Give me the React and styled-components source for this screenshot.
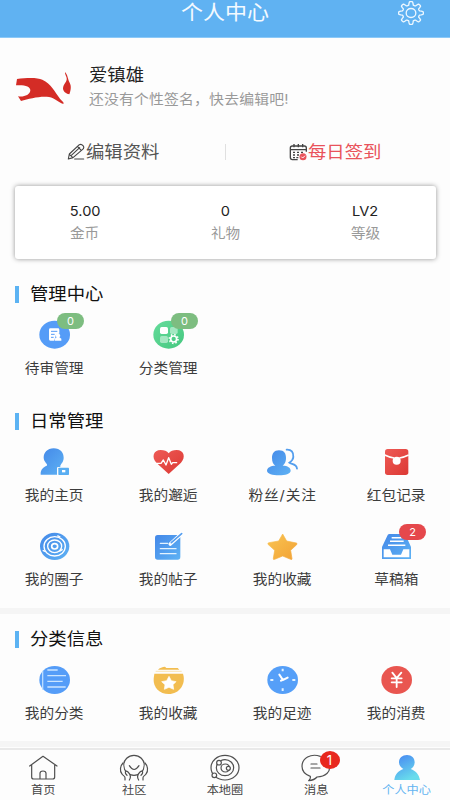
import React from "react";
import styled, { createGlobalStyle } from "styled-components";

const GlobalStyle = createGlobalStyle`
  * { box-sizing: border-box; }
  body {
    margin: 0;
    background: #fdfdfd;
    font-family: Inter, "Noto Sans CJK SC", sans-serif;
    color: #333;
  }
  svg { display: block; overflow: visible; }
`;

const Page = styled.div`
  display: flex;
  flex-direction: column;
  width: 450px;
  height: 800px;
  overflow: hidden;
`;

const Text = styled.span`
  display: inline-block;
  white-space: nowrap;
  font-size: ${(p) => p.$size}px;
  line-height: 20px;
  letter-spacing: ${(p) => p.$track || 0}px;
  color: ${(p) => p.$color || "#3c3c3c"};
  transform: scaleX(${(p) => p.$stretch || 1.08});
  transform-origin: ${(p) => p.$origin || "center"};
`;

const Header = styled.header`
  display: grid;
  grid-template-columns: 1fr auto 1fr;
  align-items: center;
  height: 38px;
  flex: none;
  padding: 0 25px 12px;
  background: #60b2f2;
  border-bottom: 1px solid #8cc9f8;
`;

const HeaderAction = styled.div`
  grid-column: 3;
  justify-self: end;
`;

const HeaderTitle = styled.div`
  grid-column: 2;
  padding-top: 1px;
`;

const Profile = styled.section`
  display: flex;
  height: 92px;
  flex: none;
  padding: 26px 14px 0;
  gap: 15px;
`;

const Avatar = styled.div`
  width: 60px;
  height: 50px;
`;

const ProfileText = styled.div`
  display: flex;
  flex-direction: column;
  align-items: flex-start;
  padding-top: 1px;
  gap: 4px;
`;

const Actions = styled.div`
  display: grid;
  grid-template-columns: 1fr 1px 1fr;
  align-items: center;
  height: 44px;
  flex: none;
`;

const ActionLink = styled.div`
  display: flex;
  align-items: center;
  gap: ${(p) => p.$gap}px;
  padding-left: ${(p) => p.$inset}px;
`;

const Divider = styled.i`
  height: 16px;
  background: #e0e0e0;
`;

const StatsCard = styled.section`
  display: grid;
  grid-template-columns: repeat(3, 1fr);
  align-items: center;
  height: 73px;
  flex: none;
  margin: 12px 14px 0 15px;
  border-radius: 3px;
  background: #fff;
  box-shadow: 0 0 5px rgba(0, 0, 0, 0.42);
`;

const Stat = styled.div`
  display: flex;
  flex-direction: column;
  align-items: center;
  gap: 2px;
  margin-top: -1px;
  padding-right: 0.5px;
`;

const SectionTitle = styled.h2`
  display: flex;
  align-items: center;
  height: 20px;
  flex: none;
  margin: ${(p) => p.$top}px 0 0 15px;
  font-weight: 400;
  gap: 11px;

  &::before {
    content: "";
    width: 4px;
    height: 17px;
    background: #5cb3f3;
  }
`;

const Grid = styled.div`
  display: grid;
  grid-template-columns: repeat(4, 114px);
  row-gap: 25px;
  flex: none;
  margin: 15px 0 0 -2px;
`;

const Cell = styled.div`
  display: flex;
  flex-direction: column;
  align-items: center;
  gap: 7px;
`;

const CellLabel = styled.div`
  display: flex;
  height: 20px;
  padding-right: 1px;
`;

const IconBox = styled.div`
  position: relative;
  width: 36px;
  height: ${(p) => p.$height || 32}px;
`;

const Badge = styled.span`
  position: absolute;
  left: 20px;
  top: -6px;
  width: 27px;
  height: 16px;
  border-radius: 8px;
  background: ${(p) => p.$color};
  color: #fff;
  font-size: 11px;
  line-height: 16px;
  text-align: center;
`;

const NavBadge = styled(Badge)`
  left: 22px;
  top: -2px;
  width: 20px;
  height: 18px;
  border-radius: 50%;
  font-size: 13px;
  line-height: 18px;
`;

const Band = styled.div`
  height: 6px;
  flex: none;
  margin-top: ${(p) => p.$top}px;
  background: #f5f5f5;
`;

const TabBar = styled.nav`
  display: grid;
  grid-template-columns: repeat(5, 91px);
  height: 52px;
  flex: none;
  margin: 1px 0 0 -3px;
  border-top: 2px solid #e9e9e9;
`;

const Tab = styled.div`
  display: flex;
  flex-direction: column;
  align-items: center;
  padding-top: 3px;
  gap: 1px;
`;

const TabLabel = styled.div`
  display: flex;
  height: 20px;
  padding-left: 1px;
`;

const Gradients = () => (
  <svg width="0" height="0">
    <defs>
      <linearGradient id="blue" x1="0" y1="0" x2="1" y2="1">
        <stop offset="0" stopColor="#4488e8" />
        <stop offset="1" stopColor="#5eb2f4" />
      </linearGradient>
      <linearGradient id="red" x1="0" y1="0" x2="1" y2="1">
        <stop offset="0" stopColor="#ee5a55" />
        <stop offset="1" stopColor="#dc3934" />
      </linearGradient>
      <linearGradient id="gold" x1="0" y1="0" x2="1" y2="1">
        <stop offset="0" stopColor="#f9c452" />
        <stop offset="1" stopColor="#f2a235" />
      </linearGradient>
      <linearGradient id="green" x1="0" y1="0" x2="1" y2="1">
        <stop offset="0" stopColor="#65dc9b" />
        <stop offset="1" stopColor="#45c77f" />
      </linearGradient>
      <linearGradient id="me" x1="0" y1="0" x2="0.5" y2="1">
        <stop offset="0" stopColor="#4684f3" />
        <stop offset="1" stopColor="#68dcec" />
      </linearGradient>
    </defs>
  </svg>
);

const GearIcon = () => {
  const points = [];
  for (let i = 0; i < 96; i++) {
    const a = (i / 96) * Math.PI * 2;
    const c = Math.cos(8 * a);
    const r = 30.5 + 5.5 * Math.tanh(2.6 * c);
    points.push(`${(r * Math.sin(a) * 1.03).toFixed(1)},${(r * -Math.cos(a) * 0.95).toFixed(1)}`);
  }
  return (
    <svg width="28" height="26" viewBox="-42 -39 84 78" fill="none" stroke="#eef8ff" strokeWidth="4" strokeLinejoin="round">
      <polygon points={points.join(" ")} />
      <ellipse rx="14.5" ry="13.5" />
    </svg>
  );
};

const BullIcon = () => (
  <svg width="60" height="50" viewBox="42 192 180 150" fill="#d42c26">
    <path d="M51 237C80 233 112 232 127 239C154 251 164 275 180 296C187 304 193 307 190 312C174 306 165 294 147 291C122 287 88 296 63 303L54 289C70 292 90 286 91 271C91 260 75 254 48 256Z" />
    <path d="M195 216C204 225 203 238 209 248C215 259 212 272 208 283C199 281 190 275 189 266C189 252 202 246 200 234C199 227 194 223 195 216Z" />
  </svg>
);

const PencilIcon = () => (
  <svg width="18" height="18" viewBox="201 39 54 54" fill="none" stroke="#444" strokeWidth="3.4" strokeLinejoin="round" strokeLinecap="round">
    <path d="M205 87L208 72L238 44Q244 41 249 47Q254 53 248 58L219 83ZM232 49L244 61M214 76L239 53M208 73L218 82M224 87H251" />
  </svg>
);

const CalendarIcon = () => (
  <svg width="19" height="18" viewBox="191 427 57 54" fill="none" stroke="#444" strokeWidth="4">
    <path d="M217 477H201Q195 477 195 470V442Q195 436 201 436H237Q243 436 243 442V453M195 447H243M206 430V440M219 430V440M232 430V440" />
    <path d="M203 455H209M215 455H221M227 455H233M203 463H209M215 463H221M203 471H209M213 471H219" />
    <circle cx="233" cy="468" r="10.5" fill="#e9535b" stroke="none" />
    <path d="M228 468L232 472L239 465" stroke="#fff" strokeWidth="3" />
  </svg>
);

const icons = {
  review: [111, 132, (
    <>
      <ellipse cx="164" cy="179" rx="46" ry="42" fill="#559cf7" />
      <path d="M151 160H174Q178 160 178 164V176Q166 176 166 187L162 197H151Q147 197 147 193V164Q147 160 151 160Z" fill="#fff" />
      <path d="M153 169H172M153 178H164M153 187H161" stroke="#559cf7" strokeWidth="3" />
      <path d="M174 176A6 6 0 0 1 178 187L184 191V197H164V191L170 187A6 6 0 0 1 174 176Z" fill="#fff" />
    </>
  )],
  category: [453, 132, (
    <>
      <ellipse cx="506" cy="179" rx="46" ry="42" fill="url(#green)" />
      <rect x="480" y="156" width="24" height="21" rx="5" fill="#fff" />
      <rect x="510" y="156" width="23" height="21" rx="5" fill="#a4e8c2" />
      <rect x="480" y="183" width="24" height="21" rx="5" fill="#a4e8c2" />
      <circle cx="521" cy="192" r="9" fill="none" stroke="#fff" strokeWidth="5" />
      <circle cx="521" cy="192" r="13" fill="none" stroke="#fff" strokeWidth="5" strokeDasharray="4.5 5.7" />
    </>
  )],
  home: [111, 138, (
    <>
      <path d="M161 145C181 145 191 158 191 173C191 185 184 190 181 197C178 201 185 201 193 201H174Q171 201 171 205V224H122C121 207 131 201 140 197C146 193 131 186 131 173C131 158 142 145 161 145Z" fill="url(#blue)" />
      <rect x="175" y="203" width="32" height="22" rx="2" fill="#59aef2" />
      <rect x="186" y="210" width="10" height="7" fill="#fff" />
    </>
  )],
  heart: [453, 138, (
    <>
      <path d="M506 222L469 188C454 172 460 150 482 150Q498 150 506 160Q514 150 530 150C552 150 558 172 543 188Z" fill="url(#red)" />
      <path d="M458 190H483L490 180L498 195L506 173L514 193L518 188H530" fill="none" stroke="#fff" strokeWidth="4" strokeLinejoin="round" strokeLinecap="round" />
    </>
  )],
  fans: [120, 138, (
    <>
      <path d="M162 151C178 151 183 161 183 174C183 187 178 193 173 197C188 197 197 203 197 212C197 221 181 226 162 226C143 226 126 221 126 212C126 203 137 197 151 197C145 193 141 187 141 174C141 161 147 151 162 151Z" fill="url(#blue)" />
      <path d="M185 149C199 148 206 157 205 171C204 180 198 185 193 188C198 194 214 190 216 206" fill="none" stroke="#539eee" strokeWidth="5.5" strokeLinecap="round" />
    </>
  )],
  packet: [462, 138, (
    <>
      <rect x="480" y="147" width="70" height="78" rx="8" fill="url(#red)" />
      <path d="M479 165Q496 173 507 174M551 165Q534 173 523 174" fill="none" stroke="#fff" strokeWidth="5" />
      <circle cx="515" cy="182" r="12" fill="#fff" />
    </>
  )],
  circle: [111, 45, (
    <>
      <ellipse cx="164" cy="94" rx="44" ry="41" fill="url(#blue)" />
      <g fill="none" stroke="#fff" strokeWidth="4">
        <ellipse cx="164" cy="94" rx="32" ry="29" />
        <ellipse cx="164" cy="94" rx="21" ry="19" />
        <ellipse cx="164" cy="94" rx="9" ry="8" strokeWidth="5" />
        <path d="M172 62L181 66M128 106L137 110M178 109L188 103" />
      </g>
    </>
  )],
  post: [453, 45, (
    <>
      <rect x="465" y="60" width="76" height="74" rx="8" fill="url(#blue)" />
      <path d="M481 85H503M481 101H528M481 116H528" stroke="#e4f3ff" strokeWidth="4" strokeLinecap="round" />
      <path d="M511 87L545 56" stroke="#fff" strokeWidth="11" strokeLinecap="round" />
      <path d="M514 83L545 56" stroke="#559eef" strokeWidth="5" strokeLinecap="round" />
    </>
  )],
  star: [120, 45, (
    <path d="M173 57L185 78L214 84Q218 85 215 89L197 106L201 131Q201 135 197 133L173 123L149 133Q144 135 145 130L149 106L129 88Q127 84 132 83L161 78Z" fill="url(#gold)" stroke="url(#gold)" strokeWidth="2" strokeLinejoin="round" />
  )],
  drafts: [462, 45, (
    <>
      <path d="M493 57H536Q541 57 543 62L558 96V132H471V96L487 62Q488 57 493 57Z" fill="url(#blue)" />
      <path d="M500 68H530M495 79H536M489 91H541" stroke="#fff" strokeWidth="4.5" />
      <path d="M476 103H495L502 119H528L535 103H553V127H476Z" fill="#fff" />
    </>
  )],
  list: [111, 192, (
    <>
      <ellipse cx="164" cy="240" rx="46" ry="42" fill="#559df8" />
      <path d="M142 210H173M142 227H198M142 244H188M142 261H197" stroke="#cbe5ff" strokeWidth="4" />
      <path d="M128 212V269" stroke="#b9dcff" strokeWidth="4" />
    </>
  )],
  favorite: [453, 192, (
    <>
      <path d="M461 236L463 221H549C559 251 538 282 506 282C479 282 459 262 461 236Z" fill="#f2bd50" />
      <path d="M474 209C478 204 488 200 495 200L499 204H533L538 209Z" fill="#f2bd50" />
      <path d="M467 214H545" stroke="#f8d791" strokeWidth="2" />
      <path d="M507 229L514 242L528 245L519 254L521 268L507 262L493 268L495 254L485 245L500 242Z" fill="#fff" stroke="#fff" strokeWidth="2" strokeLinejoin="round" />
    </>
  )],
  clock: [120, 192, (
    <>
      <ellipse cx="173" cy="240" rx="46" ry="42" fill="#559ff8" />
      <path d="M173 206V214M173 265V273M136 240H145M202 240H211" stroke="#e2f2ff" strokeWidth="6" />
      <path d="M163 224L174 240L188 233M174 238L168 242" stroke="#fff" strokeWidth="6" strokeLinecap="round" fill="none" />
    </>
  )],
  money: [462, 192, (
    <>
      <ellipse cx="515" cy="240" rx="46" ry="42" fill="#e95650" />
      <path d="M502 218L515 234L529 218M515 234V261M500 235H530M500 247H530" stroke="#fff" strokeWidth="5.5" strokeLinecap="round" fill="none" />
    </>
  )],
};

const tabIcons = {
  home: [75, 54, (
    <path d="M89 93L129 64L171 93M95 91V126Q95 132 101 132H158Q164 132 164 126V91M120 132V115Q120 108 129 108Q138 108 138 115V132" />
  )],
  community: [348, 54, (
    <>
      <ellipse cx="402" cy="91" rx="31" ry="30" />
      <path d="M388 92Q402 115 417 92" />
      <path d="M369 84C361 92 358 108 366 117C369 122 375 123 375 128V135M388 135C395 125 389 116 384 111Q378 106 376 111Q375 116 381 121M435 84C443 92 446 108 438 117C435 122 429 123 429 128V135M416 135C409 125 415 116 420 111Q426 106 428 111Q429 116 423 121" fill="#fdfdfd" />
    </>
  )],
  local: [-54, 54, (
    <>
      <ellipse cx="0" cy="98" rx="42" ry="37" />
      <ellipse cx="0" cy="98" rx="26" ry="24" strokeDasharray="116 14" strokeDashoffset="25" />
      <ellipse cx="1" cy="99" rx="13" ry="12" />
      <circle cx="-18" cy="83" r="7" fill="#fdfdfd" />
      <circle cx="-32" cy="121" r="7" fill="#fdfdfd" />
      <circle cx="10" cy="100" r="6" fill="#fdfdfd" />
    </>
  )],
  message: [219, 54, (
    <path d="M286 64C257 54 231 70 231 94C231 109 241 119 256 124C257 130 255 134 251 137C262 136 271 132 276 126C302 125 317 110 313 93M258 87H276M258 99H285" />
  )],
  me: [492, 54, (
    <path d="M546 60C560 60 569 69 569 82C569 92 563 99 557 102C572 108 582 117 585 135H508C510 117 520 108 535 102C528 98 522 92 522 82C522 69 532 60 546 60Z" fill="url(#me)" stroke="none" />
  )],
};

const Icon = ({ name }) => {
  const [x, y, drawing] = icons[name];
  return <svg width="36" height="32" viewBox={`${x} ${y} 108 96`}>{drawing}</svg>;
};

const TabIcon = ({ name }) => {
  const [x, y, drawing] = tabIcons[name];
  return (
    <svg width="36" height="28" viewBox={`${x} ${y} 108 84`} fill="none" stroke="#505050" strokeWidth="3.6" strokeLinecap="round" strokeLinejoin="round">
      {drawing}
    </svg>
  );
};

const Menu = ({ items }) => (
  <Grid>
    {items.map(([icon, label, badge, color]) => (
      <Cell key={icon}>
        <IconBox>
          <Icon name={icon} />
          {badge && <Badge $color={color}>{badge}</Badge>}
        </IconBox>
        <CellLabel>
          <Text $size={13.6} $track={label.includes("/") ? 0.8 : 0}>{label}</Text>
        </CellLabel>
      </Cell>
    ))}
  </Grid>
);

const management = [
  ["review", "待审管理", "0", "#7dbd80"],
  ["category", "分类管理", "0", "#7dbd80"],
];
const daily = [
  ["home", "我的主页"],
  ["heart", "我的邂逅"],
  ["fans", "粉丝/关注"],
  ["packet", "红包记录"],
  ["circle", "我的圈子"],
  ["post", "我的帖子"],
  ["star", "我的收藏"],
  ["drafts", "草稿箱", "2", "#e5484c"],
];
const classified = [
  ["list", "我的分类"],
  ["favorite", "我的收藏"],
  ["clock", "我的足迹"],
  ["money", "我的消费"],
];
const stats = [["5.00", "金币"], ["0", "礼物"], ["LV2", "等级"]];
const tabs = [
  ["home", "首页"],
  ["community", "社区"],
  ["local", "本地圈"],
  ["message", "消息", "1"],
  ["me", "个人中心"],
];

const Heading = ({ top, children }) => (
  <SectionTitle $top={top}>
    <Text $size={17} $color="#111" $origin="left">{children}</Text>
  </SectionTitle>
);

export default function App() {
  return (
    <Page>
      <GlobalStyle />
      <Header>
        <HeaderTitle><Text $size={20} $color="#f4faff" $stretch={1.1}>个人中心</Text></HeaderTitle>
        <HeaderAction><GearIcon /></HeaderAction>
      </Header>
      <Profile>
        <Avatar><BullIcon /></Avatar>
        <ProfileText>
          <Text $size={17} $color="#222" $origin="left">爱镇雄</Text>
          <Text $size={13.5} $color="#999" $origin="left" $stretch={1.1} $track={0.15}>还没有个性签名，快去编辑吧!</Text>
        </ProfileText>
      </Profile>
      <Actions>
        <ActionLink $inset={67} $gap={1}>
          <PencilIcon />
          <Text $size={17} $color="#555" $origin="left">编辑资料</Text>
        </ActionLink>
        <Divider />
        <ActionLink $inset={63} $gap={0}>
          <CalendarIcon />
          <Text $size={17} $color="#e9535b" $origin="left">每日签到</Text>
        </ActionLink>
      </Actions>
      <StatsCard>
        {stats.map(([value, label]) => (
          <Stat key={label}>
            <Text $size={13.5} $color="#222">{value}</Text>
            <Text $size={13.5} $color="#999">{label}</Text>
          </Stat>
        ))}
      </StatsCard>
      <Heading top={25}>管理中心</Heading>
      <Menu items={management} />
      <Heading top={33}>日常管理</Heading>
      <Menu items={daily} />
      <Band $top={19} />
      <Heading top={15}>分类信息</Heading>
      <Menu items={classified} />
      <Band $top={18} />
      <TabBar>
        {tabs.map(([icon, label, badge]) => (
          <Tab key={icon}>
            <IconBox $height={26}>
              <TabIcon name={icon} />
              {badge && <NavBadge $color="#e8281e">{badge}</NavBadge>}
            </IconBox>
            <TabLabel>
              <Text $size={11.3} $color={icon === "me" ? "#63b4f1" : "#444"}>{label}</Text>
            </TabLabel>
          </Tab>
        ))}
      </TabBar>
      <Gradients />
    </Page>
  );
}
